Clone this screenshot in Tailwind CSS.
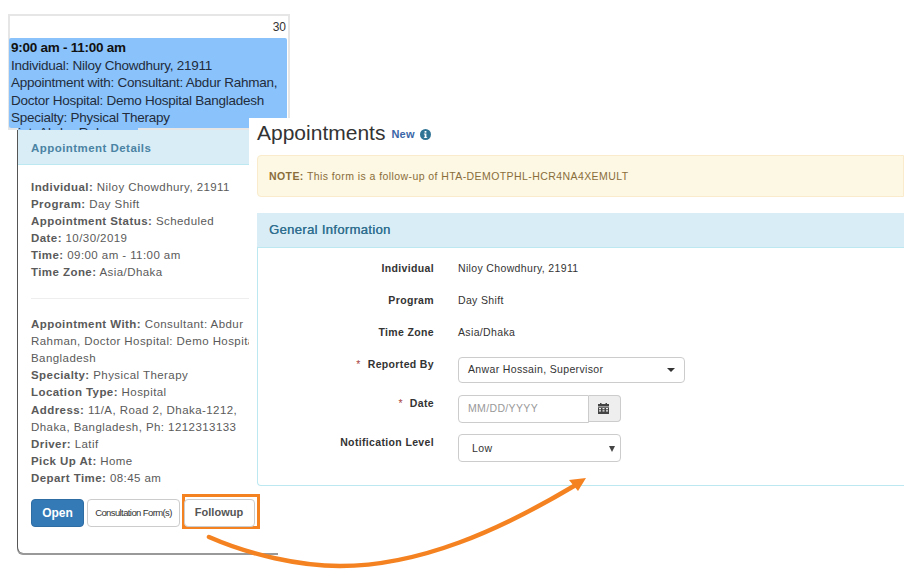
<!DOCTYPE html>
<html>
<head>
<meta charset="utf-8">
<script src="https://cdn.jsdelivr.net/npm/@tailwindcss/browser@4"></script>
</head>
<body class="bg-white">
<div class="relative w-[916px] h-[584px] overflow-hidden bg-white font-['Liberation_Sans',Arial,sans-serif]">

  <!-- calendar cell -->
  <div class="absolute left-[8px] top-[14px] w-[282px] h-[116px] bg-white border-[2px] border-[#e6e6e6] flex flex-col">
    <div class="h-[22px] pr-[2px] text-right text-[12px] leading-[22px] text-[#333]">30</div>
    <div class="ml-[-1px] w-[278px] h-[90px] bg-[#8ac3fb] rounded-[2px] pl-[2px] pt-px text-[13.5px] leading-[17.5px] tracking-[-0.25px] text-[#222c3c] whitespace-nowrap overflow-hidden">
      <p class="font-bold text-[#111]">9:00 am - 11:00 am</p>
      <p>Individual: Niloy Chowdhury, 21911</p>
      <p>Appointment with: Consultant: Abdur Rahman,</p>
      <p>Doctor Hospital: Demo Hospital Bangladesh</p>
      <p>Specialty: Physical Therapy</p>
    </div>
  </div>
  <!-- second event peeking below the first -->
  <div class="absolute left-[18px] top-[128px] w-[120px] h-[3px] bg-[#8ac3fb] overflow-hidden text-[13.5px] leading-[9px] text-[#222c3c] whitespace-nowrap">int. Abdur Rahman:</div>

  <!-- popover -->
  <div class="absolute left-[17px] top-[130px] w-[261px] h-[423px] bg-white border-l border-[#555] rounded-bl-md shadow-[0_2px_0_#999] flex flex-col">
    <div class="h-[35px] shrink-0 pt-[3px] bg-[#d9edf7] border-b border-[#bce8f1] flex items-center pl-[13px] text-[11.5px] font-bold tracking-[0.45px] text-[#4a83a3]">Appointment Details</div>
    <div class="pl-[13px] pt-[14px] text-[11.5px] leading-[17.1px] tracking-[0.43px] text-[#5a5a5a] whitespace-nowrap overflow-hidden w-[232px]">
      <p><b>Individual:</b> Niloy Chowdhury, 21911</p>
      <p><b>Program:</b> Day Shift</p>
      <p><b>Appointment Status:</b> Scheduled</p>
      <p><b>Date:</b> 10/30/2019</p>
      <p><b>Time:</b> 09:00 am - 11:00 am</p>
      <p><b>Time Zone:</b> Asia/Dhaka</p>
      <div class="h-px bg-[#eee] mt-[16.5px] mb-[17px]"></div>
      <p><b>Appointment With:</b> Consultant: Abdur</p>
      <p>Rahman, Doctor Hospital: Demo Hospital</p>
      <p>Bangladesh</p>
      <p><b>Specialty:</b> Physical Therapy</p>
      <p><b>Location Type:</b> Hospital</p>
      <p><b>Address:</b> 11/A, Road 2, Dhaka-1212,</p>
      <p>Dhaka, Bangladesh, Ph: 1212313133</p>
      <p><b>Driver:</b> Latif</p>
      <p><b>Pick Up At:</b> Home</p>
      <p><b>Depart Time:</b> 08:45 am</p>
    </div>
    <div class="flex items-start pl-[13px] pt-[12px]">
      <button class="w-[53px] h-[28px] bg-[#337ab7] border border-[#2e6da4] rounded text-white text-[12px] font-bold">Open</button>
      <button class="ml-[3px] w-[93px] h-[28px] bg-white border border-[#ccc] rounded text-[#333] text-[9.5px] tracking-[-0.6px]">Consultation Form(s)</button>
      <div class="ml-[2px] -mt-[5px] w-[78px] h-[35px] border-[3px] border-[#f58220]">
        <button class="-ml-px mt-[2px] pb-[2px] pr-[1px] block w-[71px] h-[28px] bg-white border border-[#ccc] rounded text-[#555] text-[11px] font-bold">Followup</button>
      </div>
    </div>
  </div>

  <!-- form window -->
  <div class="absolute left-[249px] top-[118px] w-[655px] h-[370px] bg-white pl-[8px]">
    <div class="h-[28px] mb-[9px] flex items-center">
      <span class="text-[21px] text-[#333] leading-none">Appointments</span>
      <span class="ml-[6px] mt-[5px] text-[11px] font-bold text-[#3a66a8] tracking-[0.2px]">New</span>
      <svg class="ml-[5px] mt-[4px]" width="11" height="11" viewBox="0 0 11 11"><circle cx="5.5" cy="5.5" r="5.5" fill="#2f7395"/><rect x="4.6" y="2" width="1.8" height="1.7" fill="#fff"/><path d="M3.9 4.6h2.5v3.6h.8v.9H3.9v-.9h.8V5.5h-.8z" fill="#fff"/></svg>
    </div>
    <div class="h-[42px] bg-[#fcf8e3] border border-[#faebcc] rounded-l flex items-center pl-[11px] pt-px text-[10.5px] tracking-[0.42px] text-[#8a6d3b]"><span><b>NOTE:</b> This form is a follow-up of HTA-DEMOTPHL-HCR4NA4XEMULT</span></div>
    <div class="mt-[16px] h-[273px] border border-t-0 border-[#bce8f1] border-r-0 rounded-bl">
      <div class="h-[35px] pb-px bg-[#d9edf7] border-b border-[#bce8f1] flex items-center pl-[12px] text-[13px] tracking-[0.35px] text-[#31708f] -ml-px"><span class="[text-shadow:0.3px_0_0_#31708f]">General Information</span></div>
      <div class="grid grid-cols-[176px_1fr] gap-x-[24px] text-[10.5px] tracking-[0.35px] text-[#333] pt-[13px]">
        <div class="text-right font-bold h-[32px] leading-[14px]">Individual</div><div class="leading-[14px]">Niloy Chowdhury, 21911</div>
        <div class="text-right font-bold h-[32px] leading-[14px]">Program</div><div class="leading-[14px]">Day Shift</div>
        <div class="text-right font-bold h-[32px] leading-[14px]">Time Zone</div><div class="leading-[14px]">Asia/Dhaka</div>
        <div class="text-right font-bold h-[39px] leading-[14px]"><span class="text-[#a94442] font-normal mr-[7px]">*</span>Reported By</div>
        <div class="h-[39px]">
          <div class="w-[227px] h-[26px] border border-[#ccc] rounded flex items-center justify-between pl-[9px] pr-[9px]"><span>Anwar Hossain, Supervisor</span><span class="w-0 h-0 border-x-[4px] border-x-transparent border-t-[4px] border-t-[#333]"></span></div>
        </div>
        <div class="text-right font-bold h-[39px] leading-[14px]"><span class="text-[#a94442] font-normal mr-[7px]">*</span>Date</div>
        <div class="h-[39px] -mt-[1px] flex">
          <div class="w-[131px] h-[28px] border border-[#ccc] rounded-l flex items-center pl-[9px] text-[#999]">MM/DD/YYYY</div>
          <div class="w-[32px] h-[27px] pr-[2px] bg-[#eee] border border-l-0 border-[#ccc] rounded-r flex items-center justify-center">
            <svg width="11" height="11" viewBox="0 0 11 11" fill="#444"><rect x="0" y="1" width="11" height="2.5"/><rect x="2" y="0" width="1.5" height="2"/><rect x="7.5" y="0" width="1.5" height="2"/><path d="M0 4.2h11V11H0z M1 5v1.2h2V5z M4.5 5v1.2h2V5z M8 5v1.2h2V5z M1 7.2v1.2h2V7.2z M4.5 7.2v1.2h2V7.2z M8 7.2v1.2h2V7.2z" fill-rule="evenodd"/></svg>
          </div>
        </div>
        <div class="text-right font-bold leading-[14px]">Notification Level</div>
        <div class="-mt-[1px]">
          <div class="w-[163px] h-[28px] pt-[1px] border border-[#ccc] rounded flex items-center justify-between pl-[13px] pr-[5px]"><span>Low</span><span class="w-0 h-0 border-x-[3.5px] border-x-transparent border-t-[6px] border-t-[#444]"></span></div>
        </div>
      </div>
    </div>
  </div>

  <!-- arrow -->
  <svg class="absolute left-0 top-0 pointer-events-none" width="916" height="584" viewBox="0 0 916 584" fill="none">
    <path d="M209 537 C 250 555, 300 566, 340 566 C 420 566, 500 530, 574 486" stroke="#f58220" stroke-width="4.5" stroke-linecap="round"/>
    <path d="M586 478 L569 480 L578 491 Z" fill="#f58220"/>
  </svg>
</div>
</body>
</html>
